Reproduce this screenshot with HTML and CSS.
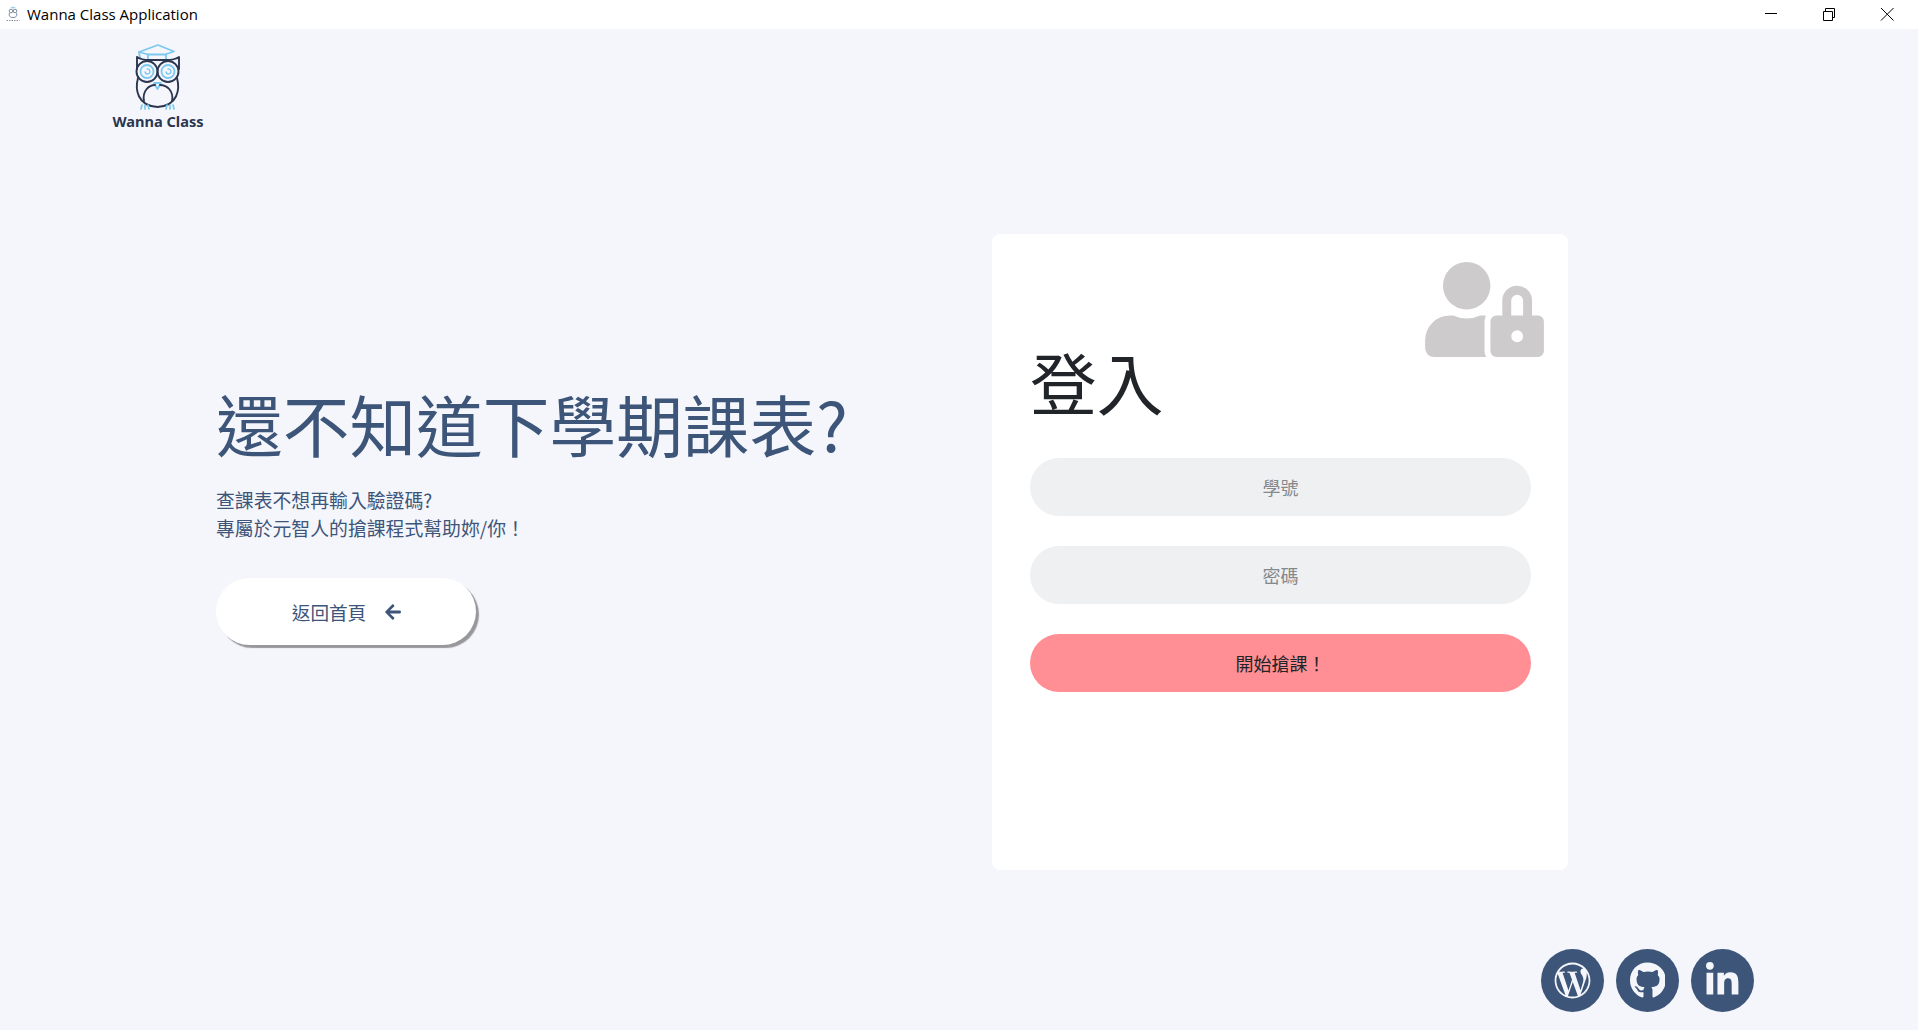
FILE: index.html
```html
<!DOCTYPE html>
<html lang="zh-Hant">
<head>
<meta charset="utf-8">
<title>Wanna Class Application</title>
<link rel="stylesheet" href="styles.css">
</head>
<body>
<header class="titlebar">
  <svg class="app-icon" viewBox="0 0 16 16" aria-hidden="true">
    <path d="M5 1.5l3-1 3 1-3 1z" fill="#9fd0ea"/>
    <circle cx="6" cy="5" r="1.8" fill="none" stroke="#6f7f99" stroke-width=".9"/>
    <circle cx="10" cy="5" r="1.8" fill="none" stroke="#6f7f99" stroke-width=".9"/>
    <path d="M4.5 7c-1 3 .5 4.5 3.5 4.5S12.500 10 11.500 7" fill="none" stroke="#6f7f99" stroke-width=".9"/>
    <path d="M1.500 14.500h13" stroke="#8a93a5" stroke-width="1.200" stroke-dasharray="1.500 1"/>
  </svg>
  <span class="app-title">Wanna Class Application</span>
  <div class="win-controls">
    <svg class="win-btn" viewBox="0 0 58 29" aria-hidden="true"><path d="M23 13.500h12" stroke="#000" fill="none"/></svg>
    <svg class="win-btn" viewBox="0 0 58 29" aria-hidden="true"><path d="M23.500 11.500h9v9h-9zM25.500 11V8.500h9v9H33" stroke="#000" fill="none"/></svg>
    <svg class="win-btn" viewBox="0 0 58 29" aria-hidden="true"><path d="M23 8l12.500 12.500M35.500 8L23 20.500" stroke="#000" fill="none"/></svg>
  </div>
</header>
<main class="page">
  <div class="brand">
    <svg class="owl" viewBox="0 0 48 66" aria-hidden="true">
      <g fill="none" stroke-linejoin="round" stroke-linecap="round">
        <path d="M5 8L24 1l16 6.500-9 3H14z" stroke="#7cc8ee" stroke-width="1.800"/>
        <path d="M5 8l1 6M14 10.500V15M32 10.500V15" stroke="#7cc8ee" stroke-width="1.800"/>
        <path d="M3 13c4 2.500 8 3 12 3h18c4 0 8-.5 12-3v12M3 13v12" stroke="#2b3650" stroke-width="1.900"/>
        <circle cx="13" cy="27.500" r="10.500" stroke="#2b3650" stroke-width="1.900"/>
        <circle cx="34" cy="27.500" r="10.500" stroke="#2b3650" stroke-width="1.900"/>
        <circle cx="13" cy="27.500" r="6.500" stroke="#7cc8ee" stroke-width="1.800"/>
        <circle cx="34" cy="27.500" r="6.500" stroke="#7cc8ee" stroke-width="1.800"/>
        <path d="M13 25a2.500 2.500 0 1 1-2 3M34 25a2.500 2.500 0 1 1-2 3" stroke="#7cc8ee" stroke-width="1.300"/>
        <path d="M20 39h7l-3.500 6z" stroke="#7cc8ee" stroke-width="1.800"/>
        <path d="M4 34C1 45 3 62 23.500 63 44 62 46 45 43 34" stroke="#2b3650" stroke-width="1.900"/>
        <path d="M10 57C8 47 15 41 21 41M26 41c7 0 14 6 12 16" stroke="#2b3650" stroke-width="1.900"/>
        <path d="M8 61l-1 4M11 61v4M14 61l1 4M33 61l-1 4M36 61v4M39 61l1 4" stroke="#7cc8ee" stroke-width="1.700"/>
      </g>
    </svg>
    <span class="brand-name">Wanna Class</span>
  </div>
  <div class="hero">
    <section class="intro">
      <h1 class="intro-title">還不知道下學期課表?</h1>
      <p class="intro-text">查課表不想再輸入驗證碼?<br>專屬於元智人的搶課程式幫助妳/你！</p>
      <a class="back-btn" href="#">返回首頁
        <svg class="back-arrow" viewBox="0 0 448 512" aria-hidden="true"><path d="M257.5 445.1l-22.2 22.2c-9.4 9.4-24.6 9.4-33.9 0L7 273c-9.4-9.4-9.4-24.6 0-33.9L201.4 44.7c9.4-9.4 24.6-9.4 33.9 0l22.2 22.2c9.5 9.5 9.3 25-.4 34.3L136.6 216H424c13.3 0 24 10.7 24 24v32c0 13.3-10.7 24-24 24H136.6l120.5 114.8c9.8 9.3 10 24.8.4 34.3z"/></svg>
      </a>
    </section>
    <section class="card">
      <svg class="card-icon" viewBox="0 0 640 512" aria-hidden="true"><path d="M224 256A128 128 0 1 0 96 128a128 128 0 0 0 128 128zm96 64a63.08 63.08 0 0 1 8.1-30.5c-4.8-.5-9.5-1.5-14.5-1.5h-16.7a174.08 174.08 0 0 1-145.8 0h-16.7A134.43 134.43 0 0 0 0 422.4V464a48 48 0 0 0 48 48h280.9a63.54 63.54 0 0 1-8.9-32zm288-32h-32v-80a80 80 0 0 0-160 0v80h-32a32 32 0 0 0-32 32v160a32 32 0 0 0 32 32h224a32 32 0 0 0 32-32V320a32 32 0 0 0-32-32zM496 432a32 32 0 1 1 32-32 32 32 0 0 1-32 32zm32-144h-64v-80a32 32 0 0 1 64 0z"/></svg>
      <h2 class="card-title">登入</h2>
      <form class="login-form">
        <input class="field" type="text" placeholder="學號">
        <input class="field" type="password" placeholder="密碼">
        <button class="submit" type="button">開始搶課！</button>
      </form>
    </section>
  </div>
  <nav class="social">
    <a class="social-link" href="#"><svg class="social-icon" viewBox="0 0 512 512" aria-hidden="true"><path d="M256 8C119.3 8 8 119.2 8 256c0 136.7 111.3 248 248 248s248-111.3 248-248C504 119.2 392.7 8 256 8zM33 256c0-32.3 6.9-63 19.3-90.7l106.4 291.4C84.3 420.5 33 344.2 33 256zm223 223c-21.9 0-43-3.2-63-9.1l66.9-194.4 68.5 187.8c.5 1.1 1 2.1 1.6 3.1-23.1 8.1-48 12.6-74 12.6zm30.7-327.5c13.4-.7 25.5-2.1 25.5-2.1 12-1.4 10.6-19.1-1.4-18.4 0 0-36.1 2.8-59.4 2.8-21.9 0-58.7-2.8-58.7-2.8-12-.7-13.4 17.7-1.4 18.4 0 0 11.4 1.4 23.4 2.1l34.7 95.2L200.6 393l-81.2-241.5c13.4-.7 25.5-2.1 25.5-2.1 12-1.4 10.6-19.1-1.4-18.4 0 0-36.1 2.8-59.4 2.8-4.2 0-9.1-.1-14.4-.3C109.6 73 178.1 33 256 33c58 0 110.9 22.2 150.6 58.5-1-.1-1.9-.2-2.9-.2-21.9 0-37.4 19.1-37.4 39.6 0 18.4 10.6 33.9 21.9 52.3 8.5 14.8 18.4 33.9 18.4 61.5 0 19.1-7.3 41.2-17 72.1l-22.2 74.3-80.7-239.6zm81.4 297.2l68.1-196.9c12.7-31.8 17-57.2 17-79.9 0-8.2-.5-15.8-1.5-22.9 17.4 31.8 27.3 68.2 27.3 107 0 82.3-44.6 154.1-110.9 192.7z"/></svg></a>
    <a class="social-link" href="#"><svg class="social-icon" viewBox="0 0 496 512" aria-hidden="true"><path d="M165.9 397.4c0 2-2.3 3.6-5.2 3.6-3.3 0-5.6-1.6-5.6-3.6 0-2 2.3-3.6 5.2-3.6 3-.3 5.6 1.3 5.6 3.6zm-31.1-4.5c-.7 2 1.3 4.3 4.3 4.9 2.6 1 5.6 0 6.2-2s-1.3-4.3-4.3-5.2c-2.6-.7-5.5.3-6.2 2.3zm44.2-1.7c-2.9.7-4.9 2.6-4.6 4.9.3 2 2.9 3.3 5.9 2.6 2.9-.7 4.9-2.6 4.6-4.6-.3-1.9-3-3.2-5.9-2.9zM244.8 8C106.1 8 0 113.3 0 252c0 110.9 69.8 205.8 169.5 239.2 12.8 2.3 17.3-5.6 17.3-12.1 0-6.2-.3-40.4-.3-61.4 0 0-70 15-84.7-29.8 0 0-11.4-29.1-27.8-36.6 0 0-22.9-15.7 1.6-15.4 0 0 24.9 2 38.6 25.8 21.9 38.6 58.6 27.5 72.9 20.9 2.3-16 8.8-27.1 16-33.7-55.9-6.2-112.3-14.3-112.3-110.5 0-27.5 7.6-41.3 23.6-58.9-2.6-6.5-11.1-33.3 2.6-67.9 20.9-6.5 69 27 69 27 20-5.6 41.5-8.5 62.8-8.5s42.8 2.9 62.8 8.5c0 0 48.1-33.6 69-27 13.7 34.7 5.2 61.4 2.6 67.9 16 17.7 25.8 31.5 25.8 58.9 0 96.5-58.9 104.2-114.8 110.5 9.2 7.9 17 22.9 17 46.4 0 33.7-.3 75.4-.3 83.6 0 6.5 4.6 14.4 17.3 12.1C428.2 457.8 496 362.9 496 252 496 113.3 383.5 8 244.8 8z"/></svg></a>
    <a class="social-link" href="#"><svg class="social-icon" viewBox="0 0 448 512" aria-hidden="true"><path d="M100.28 448H7.4V148.9h92.88zM53.79 108.1C24.09 108.1 0 83.5 0 53.8a53.79 53.79 0 0 1 107.58 0c0 29.7-24.1 54.3-53.79 54.3zM447.9 448h-92.68V302.4c0-34.7-.7-79.2-48.29-79.2-48.29 0-55.69 37.7-55.69 76.7V448h-92.78V148.9h89.08v40.8h1.3c12.4-23.5 42.69-48.3 87.88-48.3 94 0 111.28 61.9 111.28 142.3V448z"/></svg></a>
  </nav>
</main>
</body>
</html>
```
FILE: styles.css
```css
* { box-sizing: border-box; }
html, body { height: 100%; }
body {
  margin: 0;
  display: flex;
  flex-direction: column;
  background: #f5f6fc;
  color: #3d5579;
  font-family: "Noto Sans CJK TC", "Noto Sans", sans-serif;
  overflow: hidden;
}
.titlebar {
  flex: none;
  height: 29px;
  background: #fff;
  display: flex;
  align-items: center;
  padding: 0 0 2px 5px;
}
.app-icon { width: 16px; height: 16px; margin-right: 6px; }
.app-title {
  font-family: "Open Sans", "Noto Sans", sans-serif;
  font-size: 15px;
  color: #000;
}
.win-controls { margin: 2px 0 0 auto; display: flex; padding-right: 2px; }
.win-btn { width: 58px; height: 29px; display: block; }
.page {
  flex: 1;
  display: flex;
  flex-direction: column;
  min-height: 0;
}
.brand {
  display: flex;
  flex-direction: column;
  align-items: center;
  width: 92px;
  margin: 15px 0 0 112px;
}
.owl { width: 48px; height: 66px; display: block; }
.brand-name {
  font-family: "Noto Sans", sans-serif;
  font-weight: 700;
  font-size: 14.6px;
  line-height: 16px;
  color: #2b3650;
  white-space: nowrap;
  margin-top: 3px;
}
.hero {
  display: flex;
  align-items: flex-start;
  margin-top: 105px;
  padding-left: 216px;
}
.intro { width: 776px; padding-top: 149px; }
.intro-title {
  margin: 0;
  font-size: 66.7px;
  font-weight: 400;
  line-height: 80px;
  white-space: nowrap;
}
.intro-text {
  margin: 23px 0 0;
  font-size: 18.85px;
  line-height: 28px;
}
.back-btn {
  margin-top: 36px;
  width: 260px;
  height: 67px;
  display: flex;
  align-items: center;
  justify-content: center;
  gap: 18px;
  padding-left: 2px;
  background: #fff;
  border-radius: 34px;
  box-shadow: 3px 3px 1px #98979c;
  color: #3d5579;
  font-size: 18.6px;
  text-decoration: none;
}
.back-arrow { width: 18px; height: 18px; fill: #3d5579; }
.card {
  width: 576px;
  height: 636px;
  background: #fff;
  border-radius: 8px;
  padding: 29px 37px 0 38px;
  position: relative;
}
.card-icon {
  position: absolute;
  top: 28px;
  right: 24px;
  width: 119px;
  height: 95px;
  fill: #cdcbcc;
}
.card-title {
  margin: 80px 0 0;
  font-size: 66.7px;
  font-weight: 400;
  line-height: 76px;
  color: #212529;
}
.login-form {
  display: flex;
  flex-direction: column;
  gap: 30px;
  margin-top: 39px;
}
.field, .submit {
  width: 100%;
  height: 58px;
  border: none;
  border-radius: 29px;
  font-family: "Noto Sans CJK TC", "Noto Sans", sans-serif;
  font-size: 18px;
  text-align: center;
}
.field { background: #eff0f2; color: #212529; }
.field::placeholder { color: #85888c; opacity: 1; }
.submit { background: #ff8f94; color: #212529; }
.social {
  margin-top: auto;
  display: flex;
  gap: 12px;
  justify-content: flex-end;
  padding: 0 164px 18px 0;
}
.social-link {
  width: 63px;
  height: 63px;
  border-radius: 50%;
  background: #3d5579;
  display: flex;
  align-items: center;
  justify-content: center;
}
.social-icon { height: 37px; fill: #f5f6fc; display: block; }
```
